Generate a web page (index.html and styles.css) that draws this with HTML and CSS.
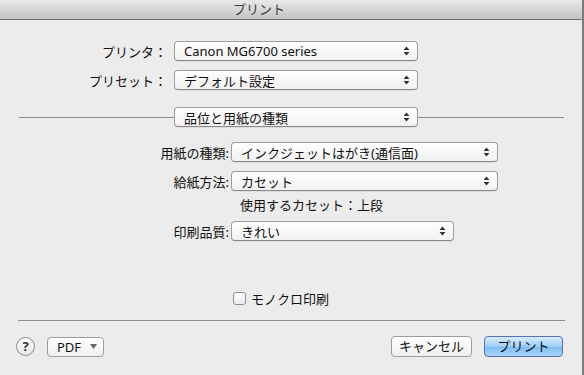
FILE: index.html
```html
<!DOCTYPE html>
<html lang="ja">
<head>
  <meta charset="UTF-8">
  <title>プリント</title>
  <link rel="stylesheet" href="styles.css">
</head>
<body>

<div class="window">
  <div class="titlebar">プリント</div>

  <div class="content">
    <div class="row top-row">
      <span class="label wide">プリンタ：</span>
      <div class="popup w243">
        <span>Canon MG6700 series</span>
        <svg class="arrows" width="7" height="10" viewBox="0 0 7 10"><path d="M3.5 0.5 L6.5 4 L0.5 4 Z M0.5 6 L6.5 6 L3.5 9.5 Z" fill="#333"/></svg>
      </div>
    </div>

    <div class="row top-row">
      <span class="label wide">プリセット：</span>
      <div class="popup w243">
        <span>デフォルト設定</span>
        <svg class="arrows" width="7" height="10" viewBox="0 0 7 10"><path d="M3.5 0.5 L6.5 4 L0.5 4 Z M0.5 6 L6.5 6 L3.5 9.5 Z" fill="#333"/></svg>
      </div>
    </div>

    <div class="section-row">
      <div class="rule left-rule"></div>
      <div class="popup w243">
        <span>品位と用紙の種類</span>
        <svg class="arrows" width="7" height="10" viewBox="0 0 7 10"><path d="M3.5 0.5 L6.5 4 L0.5 4 Z M0.5 6 L6.5 6 L3.5 9.5 Z" fill="#333"/></svg>
      </div>
      <div class="rule right-rule"></div>
    </div>

    <div class="row sub-row first">
      <span class="label narrow">用紙の種類:</span>
      <div class="popup w266">
        <span>インクジェットはがき(通信面)</span>
        <svg class="arrows" width="7" height="10" viewBox="0 0 7 10"><path d="M3.5 0.5 L6.5 4 L0.5 4 Z M0.5 6 L6.5 6 L3.5 9.5 Z" fill="#333"/></svg>
      </div>
    </div>

    <div class="row sub-row">
      <span class="label narrow">給紙方法:</span>
      <div class="popup w266">
        <span>カセット</span>
        <svg class="arrows" width="7" height="10" viewBox="0 0 7 10"><path d="M3.5 0.5 L6.5 4 L0.5 4 Z M0.5 6 L6.5 6 L3.5 9.5 Z" fill="#333"/></svg>
      </div>
    </div>

    <div class="note">使用するカセット：上段</div>

    <div class="row sub-row after-note">
      <span class="label narrow">印刷品質:</span>
      <div class="popup w222">
        <span>きれい</span>
        <svg class="arrows" width="7" height="10" viewBox="0 0 7 10"><path d="M3.5 0.5 L6.5 4 L0.5 4 Z M0.5 6 L6.5 6 L3.5 9.5 Z" fill="#333"/></svg>
      </div>
    </div>

    <label class="check">
      <span class="box"></span>
      <span>モノクロ印刷</span>
    </label>

    <div class="rule bottom-rule"></div>

    <div class="footer">
      <div class="help">?</div>
      <div class="pdf">
        <span>PDF</span>
        <svg width="7" height="5" viewBox="0 0 7 5"><path d="M0 0 L7 0 L3.5 5 Z" fill="#666"/></svg>
      </div>
      <div class="spacer"></div>
      <div class="btn">キャンセル</div>
      <div class="btn primary">プリント</div>
    </div>
  </div>
</div>

</body>
</html>
```

FILE: styles.css
```css
body {
  margin: 0;
  background-color: #ececec;
  font-family: "Noto Sans", "Noto Sans CJK JP", sans-serif;
  font-size: 13px;
  color: #111;
}
.window {
  width: 582px;
  height: 375px;
  border-right: 2px solid #7c7c7c;
  background-color: #ececec;
}
.titlebar {
  height: 19px;
  line-height: 19px;
  padding-right: 64px;
  text-align: center;
  font-size: 13px;
  color: #3a3a3a;
  background: linear-gradient(#e9e9e9, #c4c4c4);
  border-bottom: 1px solid #6e6e6e;
}
.content {
  display: flex;
  flex-direction: column;
}
.row {
  display: flex;
  align-items: center;
  height: 20px;
}
.top-row {
  margin-top: 9px;
}
.top-row:first-child {
  margin-top: 21px;
}
.label {
  text-align: right;
  white-space: nowrap;
}
.label.wide {
  width: 167px;
  margin-right: 7px;
}
.label.narrow {
  width: 229px;
  margin-right: 2px;
}
.popup {
  box-sizing: border-box;
  height: 20px;
  display: flex;
  align-items: center;
  justify-content: space-between;
  padding: 0 7px 0 9px;
  background: linear-gradient(#ffffff, #f1f1f1);
  border: 1px solid #9d9d9d;
  border-bottom-color: #888;
  border-radius: 4px;
  box-shadow: 0 1px 0 rgba(0, 0, 0, 0.06);
  white-space: nowrap;
}
.w243 { width: 244px; }
.w266 { width: 267px; }
.w222 { width: 223px; }
.section-row {
  display: flex;
  align-items: center;
  margin-top: 17px;
  height: 20px;
}
.rule {
  height: 1px;
  background-color: #8e8e8e;
}
.left-rule {
  width: 155px;
  margin-left: 19px;
}
.right-rule {
  width: 146px;
}
.sub-row {
  margin-top: 9px;
}
.sub-row.first {
  margin-top: 15px;
}
.note {
  height: 20px;
  line-height: 20px;
  margin-top: 4px;
  padding-left: 240px;
}
.sub-row.after-note {
  margin-top: 6px;
}
.check {
  display: flex;
  align-items: center;
  gap: 5px;
  margin-top: 49px;
  padding-left: 233px;
  height: 16px;
}
.box {
  box-sizing: border-box;
  width: 13px;
  height: 13px;
  border: 1px solid #8f8f8f;
  border-radius: 3px;
  background: linear-gradient(#ffffff, #ececec);
}
.bottom-rule {
  width: 547px;
  margin-left: 18px;
  margin-top: 14px;
}
.footer {
  display: flex;
  align-items: center;
  margin-top: 15px;
  padding: 0 19px 0 16px;
  height: 21px;
}
.help {
  box-sizing: border-box;
  width: 19px;
  height: 19px;
  border-radius: 50%;
  border: 1px solid #8a8a8a;
  background: linear-gradient(#ffffff, #e6e6e6);
  text-align: center;
  line-height: 17px;
  font-weight: bold;
  font-size: 13px;
  color: #333;
}
.pdf {
  box-sizing: border-box;
  display: flex;
  align-items: center;
  justify-content: space-between;
  width: 57px;
  height: 20px;
  margin-left: 12px;
  padding: 0 6px 0 9px;
  border: 1px solid #9d9d9d;
  border-radius: 4px;
  background: linear-gradient(#ffffff, #f0f0f0);
}
.spacer {
  flex: 1;
}
.btn {
  box-sizing: border-box;
  height: 21px;
  line-height: 19px;
  width: 81px;
  text-align: center;
  border: 1px solid #9d9d9d;
  border-radius: 4px;
  background: linear-gradient(#ffffff, #efefef);
}
.btn.primary {
  width: 79px;
  margin-left: 12px;
  border-color: #5a6fb0;
  background: linear-gradient(#d8ecfd, #9dcdf6 50%, #7bbcf2 51%, #a9d6fb);
}
```
